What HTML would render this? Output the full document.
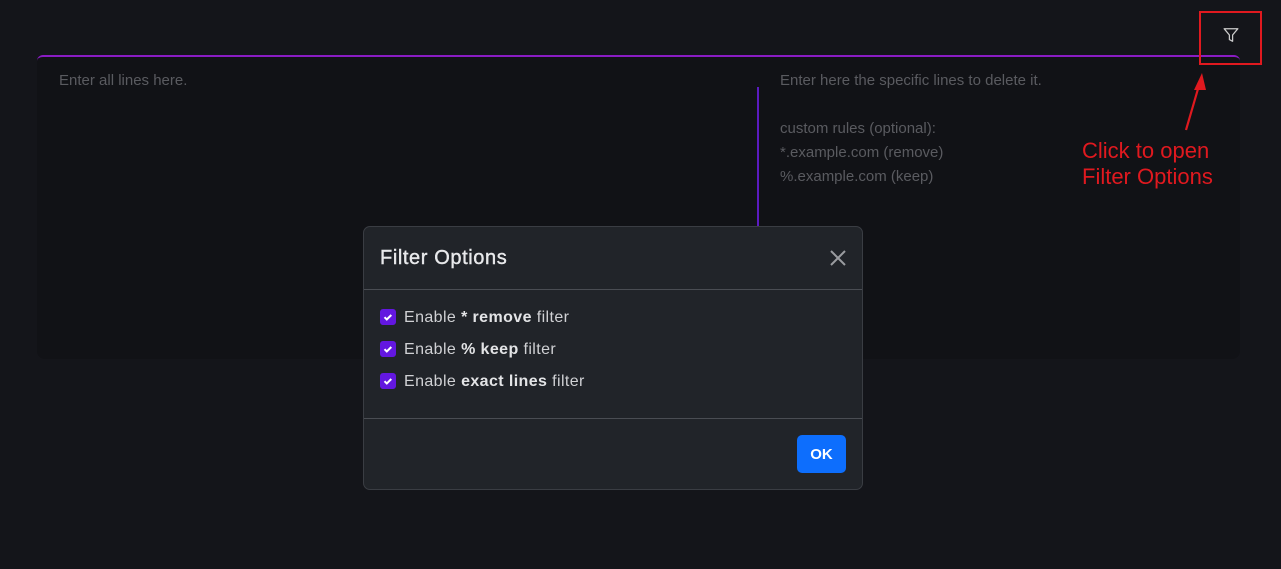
<!DOCTYPE html>
<html><head><meta charset="utf-8"><style>
*{box-sizing:border-box;margin:0;padding:0}
body{width:1281px;height:569px;background:#14151a;font-family:"Liberation Sans",sans-serif;position:relative;overflow:hidden}
.panel{position:absolute;left:37px;top:55px;width:1203px;height:304px;background:#111216;border-top:2px solid #8a1cc4;border-radius:6px 6px 8px 8px}
.ph{position:absolute;color:#5a5b60;font-size:15px}
.div{position:absolute;left:757px;top:87px;width:2px;height:140px;background:#5b1bc0}
.modal{position:absolute;left:363px;top:226px;width:500px;height:264px;background:#212429;border:1px solid #3a3d43;border-radius:7px}
.hd{height:63px;border-bottom:1px solid #4a4d53;position:relative}
.hd h1{position:absolute;left:16px;top:20px;font-size:20px;font-weight:normal;color:#e8e9eb;letter-spacing:.6px;-webkit-text-stroke:0.4px #e8e9eb}
.x{position:absolute;left:465px;top:22px}
.row{position:absolute;left:16px;font-size:16px;color:#d0d1d4;letter-spacing:.4px}
.row b{color:#e3e4e6}
.cb{display:inline-block;width:16px;height:16px;background:#6317e0;border-radius:3px;vertical-align:-3px;margin-right:8px;position:relative}
.ft{position:absolute;left:0;right:0;top:191px;border-top:1px solid #4a4d53}
.ok{position:absolute;left:433px;top:208px;width:49px;height:38px;background:#0d6efd;border-radius:5px;color:#fff;font-weight:bold;font-size:15px;text-align:center;line-height:40px}
.red{position:absolute;color:#e0191f;font-size:22px;line-height:26px}
</style></head><body>
<div class="panel"></div>
<div class="ph" style="left:59px;top:72px">Enter all lines here.</div>
<div class="ph" style="left:780px;top:69px;line-height:24px">Enter here the specific lines to delete it.<br><br>custom rules (optional):<br>*.example.com (remove)<br>%.example.com (keep)</div>
<div class="div"></div>
<div style="position:absolute;left:1199px;top:11px;width:63px;height:54px;border:2px solid #e0191f"></div>
<svg style="position:absolute;left:1223px;top:27px" width="16" height="16" viewBox="0 0 14 14"><path d="M1 1.5h12l-4.6 5.5v5.5l-2.8-1.5v-4z" fill="none" stroke="#ccc" stroke-width="1.1" stroke-linejoin="round"/></svg>
<svg style="position:absolute;left:1180px;top:70px" width="30" height="64"><path d="M6 60L20 12" stroke="#e0191f" stroke-width="2.2"/><path d="M22 3L14 20L26 20z" fill="#e0191f"/></svg>
<div class="red" style="left:1082px;top:138px">Click to open<br>Filter Options</div>
<div class="modal">
<div class="hd"><h1>Filter Options</h1>
<svg class="x" width="18" height="18"><path d="M2 2L16 16M16 2L2 16" stroke="#9a9ca0" stroke-width="2"/></svg></div>
<div class="row" style="top:82px"><span class="cb"><svg width="16" height="16" style="position:absolute;left:0;top:0"><path d="M4.5 8.2l2.3 2.3 4.5-4.5" fill="none" stroke="#fff" stroke-width="2"/></svg></span>Enable <b>* remove</b> filter</div>
<div class="row" style="top:114px"><span class="cb"><svg width="16" height="16" style="position:absolute;left:0;top:0"><path d="M4.5 8.2l2.3 2.3 4.5-4.5" fill="none" stroke="#fff" stroke-width="2"/></svg></span>Enable <b>% keep</b> filter</div>
<div class="row" style="top:146px"><span class="cb"><svg width="16" height="16" style="position:absolute;left:0;top:0"><path d="M4.5 8.2l2.3 2.3 4.5-4.5" fill="none" stroke="#fff" stroke-width="2"/></svg></span>Enable <b>exact lines</b> filter</div>
<div class="ft"></div>
<div class="ok">OK</div>
</div>
</body></html>
